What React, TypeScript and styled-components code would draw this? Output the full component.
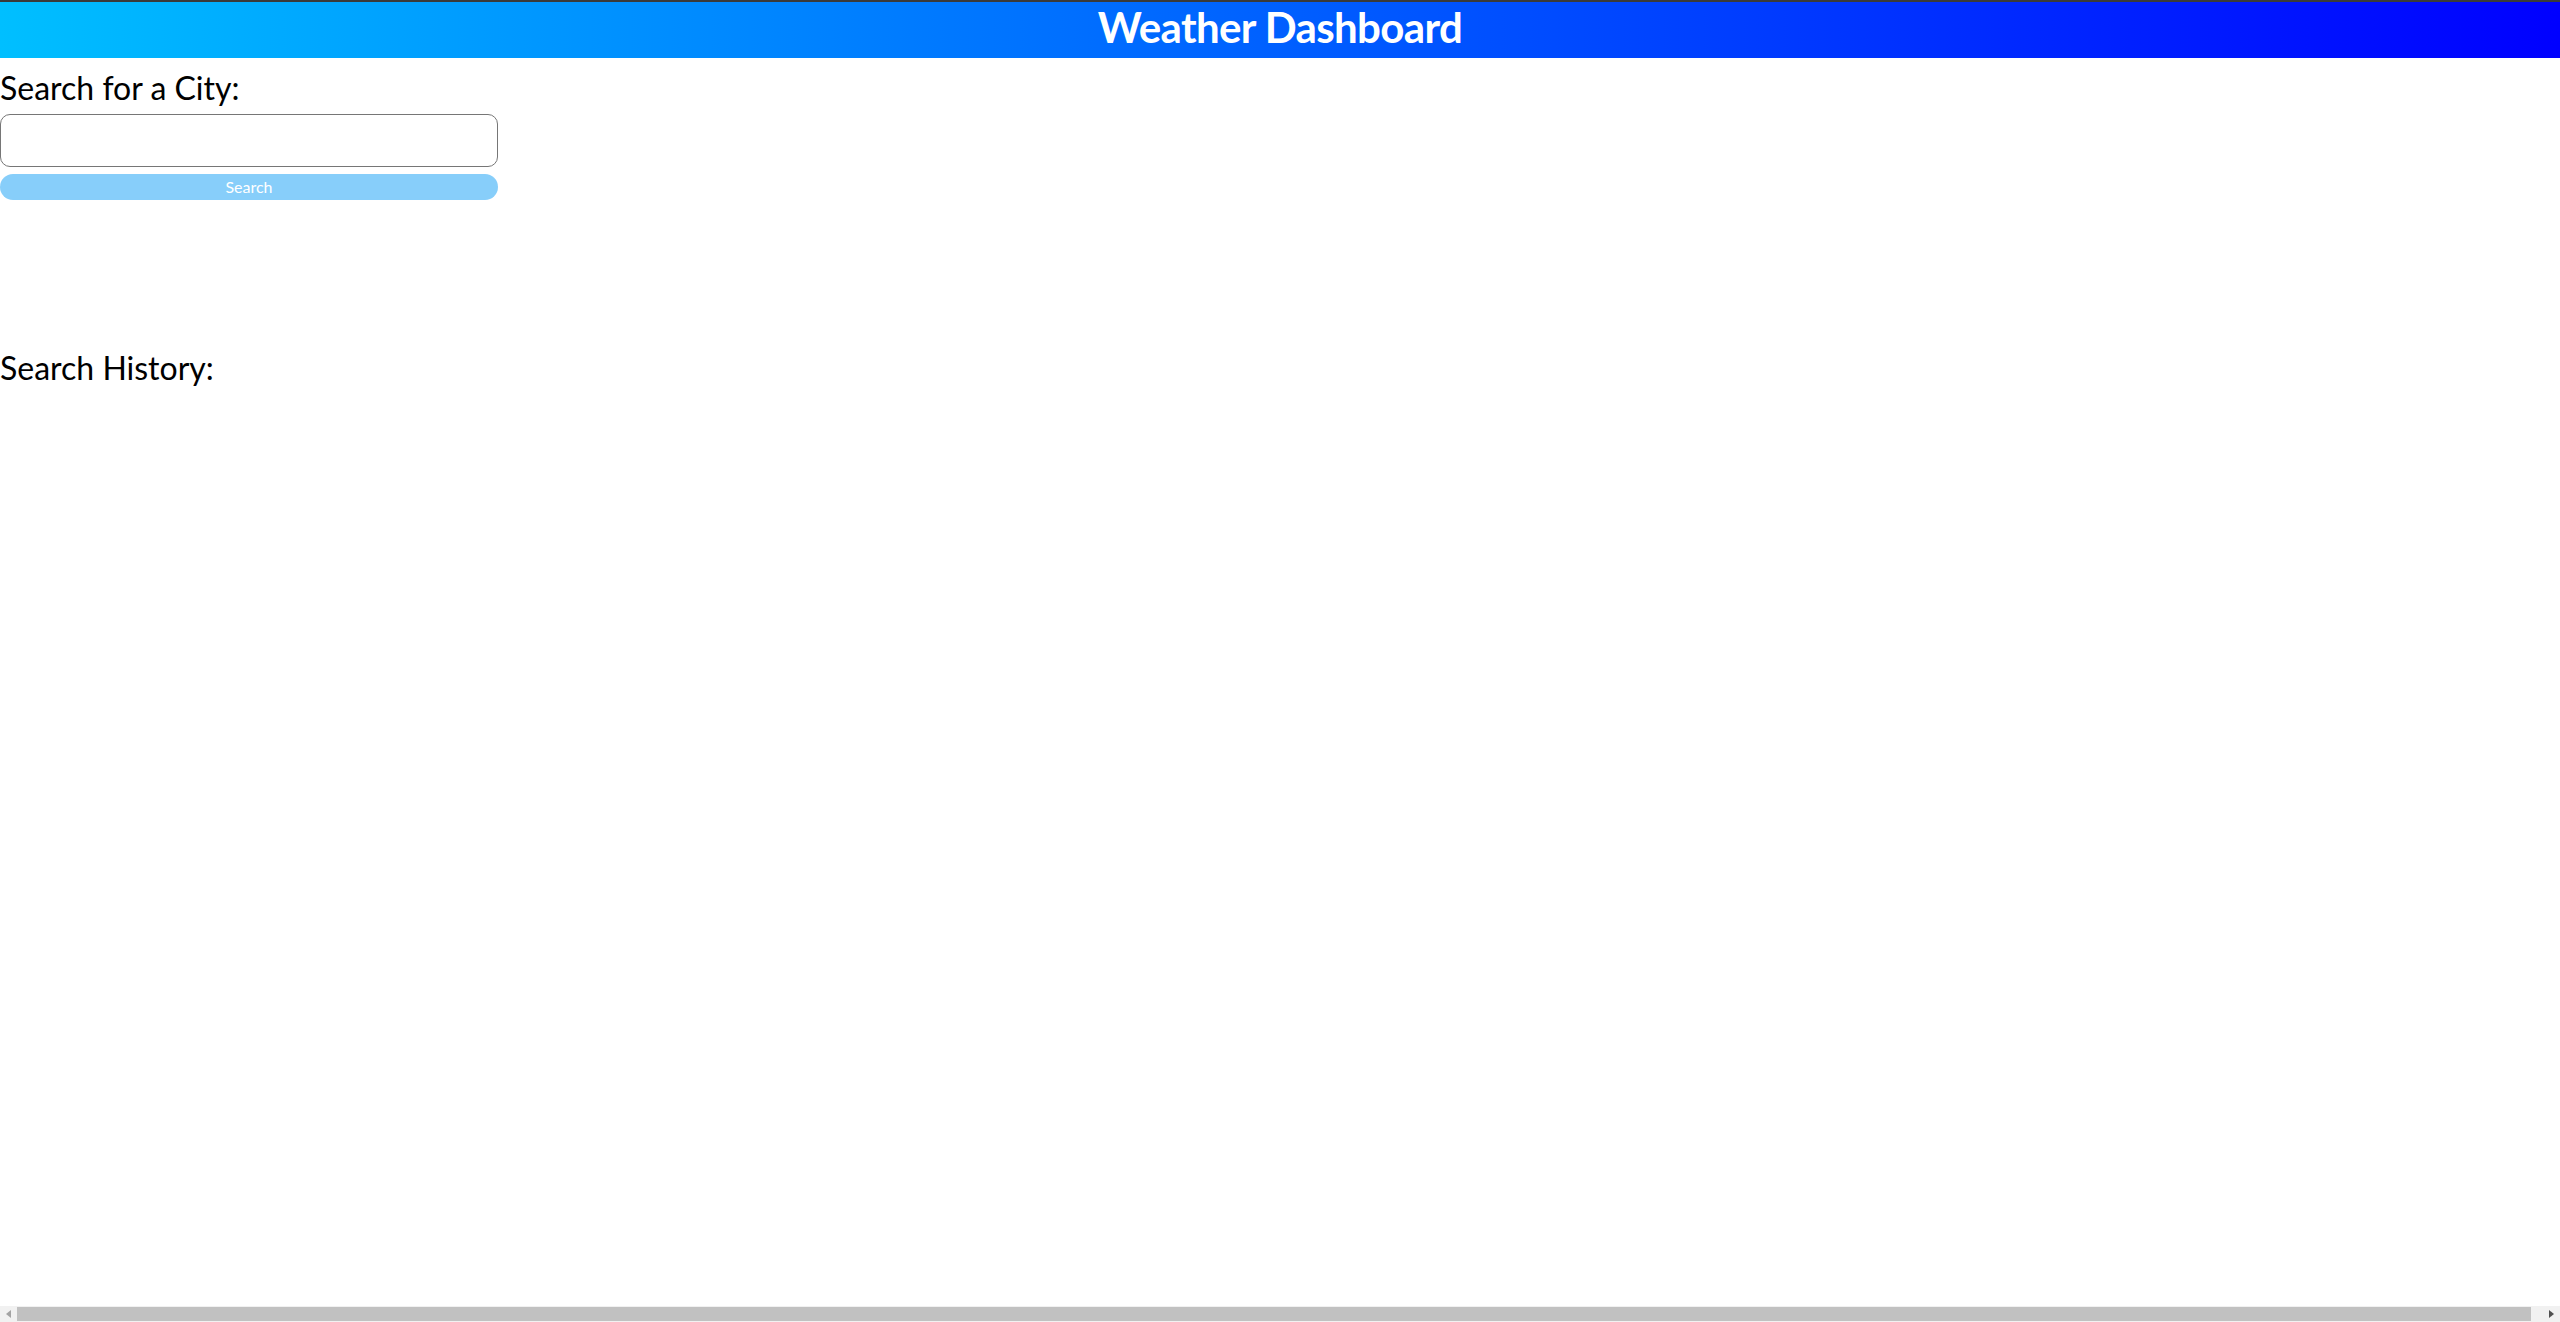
import React from "react";
import styled, { createGlobalStyle } from "styled-components";

const GlobalStyle = createGlobalStyle`
  html, body {
    margin: 0;
    padding: 0;
    background: #ffffff;
  }
  body {
    font-family: "Segoe UI", Lato, "Open Sans", sans-serif;
    color: #000000;
  }
  * {
    box-sizing: border-box;
  }
`;

const Page = styled.div`
  width: 100%;
  min-height: 100vh;
  border-top: 2px solid #3a3a3a;
`;

const Header = styled.header`
  height: 56px;
  background: linear-gradient(to right, #00bfff, #0000ff);
  display: flex;
  justify-content: center;
  align-items: flex-start;
`;

const Title = styled.h1`
  margin: 0;
  font-size: 42px;
  line-height: 50px;
  font-weight: 700;
  color: #ffffff;
  letter-spacing: -0.6px;
`;

const Sidebar = styled.section`
  display: flex;
  flex-direction: column;
  align-items: flex-start;
  width: 498px;
`;

const SectionTitle = styled.h2<{ $gap: number }>`
  margin: ${(p) => p.$gap}px 0 0 0;
  font-size: 32px;
  line-height: 40px;
  font-weight: 400;
  color: #000000;
  white-space: nowrap;
`;

const CityInput = styled.input`
  margin-top: 6px;
  width: 498px;
  height: 53px;
  border: 1px solid #767676;
  border-radius: 10px;
  padding: 0 10px;
  font-size: 20px;
  font-family: inherit;
  outline: none;
  background: #ffffff;
`;

const SearchButton = styled.button`
  margin-top: 7px;
  width: 498px;
  height: 26px;
  border: none;
  border-radius: 13px;
  background: #87cefa;
  color: #ffffff;
  font-family: inherit;
  font-size: 16px;
  line-height: 26px;
  padding: 0;
  cursor: pointer;
`;

const HistoryList = styled.ul`
  margin: 0;
  padding: 0;
  list-style: none;
`;

/* Horizontal page scrollbar, drawn over the bottom of the viewport */
const ScrollBar = styled.div`
  position: fixed;
  left: 0;
  right: 0;
  bottom: 0;
  height: 16px;
  background: #f1f1f1;
  display: flex;
  align-items: stretch;
`;

const ScrollArrow = styled.div<{ $dark?: boolean }>`
  width: 17px;
  flex: 0 0 17px;
  display: flex;
  align-items: center;
  justify-content: center;
  color: ${(p) => (p.$dark ? "#505050" : "#a3a3a3")};
`;

const ScrollTrack = styled.div`
  flex: 1;
  display: flex;
  align-items: stretch;
  padding: 1px 12px 1px 0;
`;

const ScrollThumb = styled.div`
  flex: 1;
  background: #c1c1c1;
`;

const Arrow = ({ dir }: { dir: "left" | "right" }) => (
  <svg width="5" height="8" viewBox="0 0 5 8">
    {dir === "left" ? (
      <polygon points="5,0 5,8 0,4" fill="currentColor" />
    ) : (
      <polygon points="0,0 0,8 5,4" fill="currentColor" />
    )}
  </svg>
);

export default function App() {
  return (
    <>
      <GlobalStyle />
      <Page>
        <Header>
          <Title>Weather Dashboard</Title>
        </Header>
        <Sidebar>
          <SectionTitle $gap={10}>Search for a City:</SectionTitle>
          <CityInput type="text" aria-label="City" />
          <SearchButton type="button">Search</SearchButton>
          <SectionTitle $gap={148}>Search History:</SectionTitle>
          <HistoryList />
        </Sidebar>
      </Page>
      <ScrollBar>
        <ScrollArrow>
          <Arrow dir="left" />
        </ScrollArrow>
        <ScrollTrack>
          <ScrollThumb />
        </ScrollTrack>
        <ScrollArrow $dark>
          <Arrow dir="right" />
        </ScrollArrow>
      </ScrollBar>
    </>
  );
}
